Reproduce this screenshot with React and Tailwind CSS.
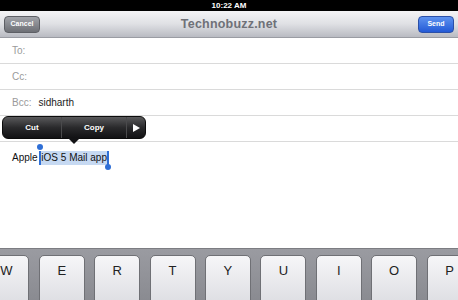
import React from "react";

const keys = ["Q", "W", "E", "R", "T", "Y", "U", "I", "O", "P"];

function Field({ label, value }) {
  return (
    <div className="h-[26px] flex items-center px-3 border-b border-[#dadada] text-[10px]">
      <span className="text-[#9a9a9a]">{label}</span>
      {value && <span className="ml-[7px] text-[#222]">{value}</span>}
    </div>
  );
}

export default function App() {
  return (
    <div
      className="w-[458px] h-[300px] overflow-hidden bg-white flex flex-col relative"
      style={{ fontFamily: '"Liberation Sans", Arial, sans-serif' }}
    >
      {/* status bar */}
      <div className="h-[11px] bg-black flex items-center justify-center text-white text-[8px] font-bold leading-none">
        10:22 AM
      </div>

      {/* nav bar */}
      <div className="h-[27px] flex items-center justify-between px-1 bg-gradient-to-b from-[#f4f4f6] via-[#dfe0e4] to-[#b9bbc2] border-b border-[#9a9ca3]">
        <button className="w-[36px] h-[17px] rounded-[4px] bg-gradient-to-b from-[#a2a4aa] to-[#6d6f75] border border-[#5d5f65] text-white text-[7px] font-bold">
          Cancel
        </button>
        <div className="text-[12.5px] font-bold text-[#6f7178] tracking-[0.2px]">Technobuzz.net</div>
        <button className="w-[36px] h-[17px] rounded-[4px] bg-gradient-to-b from-[#5e92ef] to-[#2359d6] border border-[#2a4fa8] text-white text-[7px] font-bold">
          Send
        </button>
      </div>

      {/* fields */}
      <Field label="To:" />
      <Field label="Cc:" />
      <Field label="Bcc:" value="sidharth" />
      <div className="h-[26px] border-b border-[#dadada]" />

      {/* body */}
      <div className="flex-1 relative">
        <div className="pt-[8px] pl-3 text-[10px] text-[#111] flex items-center">
          <span>Apple&nbsp;</span>
          <span className="relative bg-[#c6d9f2] px-[1px] leading-[14px]">
            iOS 5 Mail app
            <span className="absolute left-[-1px] top-0 bottom-0 w-[2px] bg-[#2f6fd6]" />
            <span className="absolute left-[-3px] top-[-7px] w-[6px] h-[6px] rounded-full bg-[#2f6fd6]" />
            <span className="absolute right-[-1px] top-0 bottom-0 w-[2px] bg-[#2f6fd6]" />
            <span className="absolute right-[-3px] bottom-[-5px] w-[6px] h-[6px] rounded-full bg-[#2f6fd6]" />
          </span>
        </div>
      </div>

      {/* keyboard */}
      <div className="h-[52px] bg-gradient-to-b from-[#9a9ba1] to-[#8a8b91] border-t border-[#7c7d82] pt-[6px] flex gap-[9.4px] ml-[-72px]">
        {keys.map((k) => (
          <div
            key={k}
            className="w-[46px] shrink-0 h-[60px] rounded-[5px] bg-gradient-to-b from-[#f6f6f8] to-[#d8d9de] border border-[#6f7075] flex justify-center pt-[5px] text-[13px] text-[#222]"
          >
            {k}
          </div>
        ))}
      </div>

      {/* edit menu */}
      <div className="absolute left-[2px] top-[116px] w-[144px]">
        <div className="h-[23px] rounded-[6px] bg-gradient-to-b from-[#5a5a5c] via-[#2a2a2c] to-[#121214] border border-[#0c0c0c] flex items-center text-white text-[8px] font-bold">
          <div className="w-[58px] text-center">Cut</div>
          <div className="w-px h-full bg-[#4a4a4c]" />
          <div className="w-[64px] text-center">Copy</div>
          <div className="w-px h-full bg-[#4a4a4c]" />
          <div className="flex-1 flex justify-center">
            <svg width="7" height="8" viewBox="0 0 7 8">
              <path d="M0 0 L7 4 L0 8 Z" fill="#fff" />
            </svg>
          </div>
        </div>
        <div className="absolute left-[66px] top-[22px] w-0 h-0 border-l-[6px] border-r-[6px] border-t-[6px] border-l-transparent border-r-transparent border-t-[#131315]" />
      </div>
    </div>
  );
}
